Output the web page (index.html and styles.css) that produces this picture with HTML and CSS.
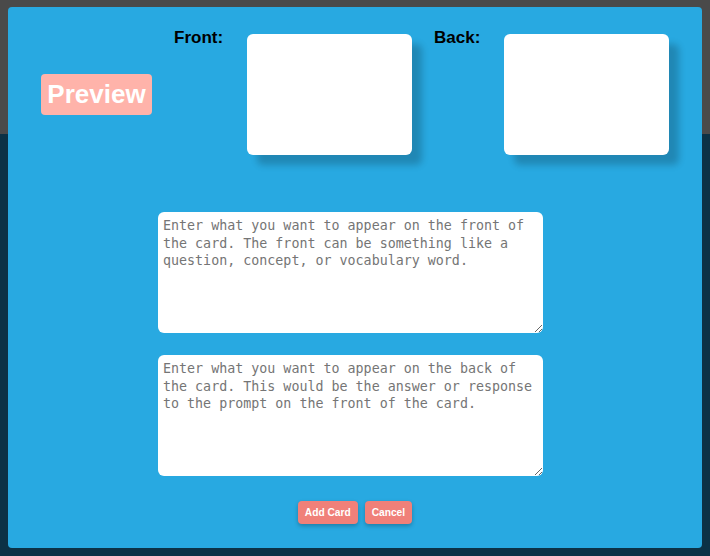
FILE: index.html
```html
<!DOCTYPE html>
<html>
<head>
<meta charset="utf-8">
<link rel="stylesheet" href="styles.css">
</head>
<body>
<div class="page">
  <div class="page-header"></div>
  <div class="page-body"></div>
</div>
<div class="modal">
  <div class="preview-row">
    <div class="preview-badge">Preview</div>
    <div class="side">
      <div class="side-label front-label">Front:</div>
      <div class="card"></div>
    </div>
    <div class="side back-side">
      <div class="side-label back-label">Back:</div>
      <div class="card"></div>
    </div>
  </div>
  <div class="form">
    <textarea class="field" placeholder="Enter what you want to appear on the front of the card. The front can be something like a question, concept, or vocabulary word."></textarea>
    <textarea class="field" placeholder="Enter what you want to appear on the back of the card. This would be the answer or response to the prompt on the front of the card."></textarea>
    <div class="actions">
      <button class="btn">Add Card</button>
      <button class="btn">Cancel</button>
    </div>
  </div>
</div>
</body>
</html>
```

FILE: styles.css
```css
html, body {
  margin: 0;
  padding: 0;
}
body {
  font-family: "Liberation Sans", Arial, sans-serif;
  width: 710px;
  height: 556px;
  overflow: hidden;
}
.page-header {
  height: 134px;
  background: #4a4a4a;
}
.page-body {
  height: 422px;
  background: #0c3246;
}
.modal {
  position: fixed;
  top: 7px;
  left: 8px;
  width: 694px;
  height: 541px;
  background: #28a9e1;
  border-radius: 4px;
  box-sizing: border-box;
}
.preview-row {
  display: flex;
  align-items: flex-start;
  padding: 21px 33px 0 33px;
}
.preview-badge {
  margin-top: 46px;
  margin-right: 22px;
  width: 111px;
  height: 41px;
  box-sizing: border-box;
  background: #ffb3aa;
  color: #fff;
  font-weight: bold;
  font-size: 26px;
  line-height: 41px;
  text-align: center;
  border-radius: 4px;
}
.side {
  display: flex;
  align-items: flex-start;
}
.back-side {
  margin-left: 22px;
}
.side-label {
  font-weight: bold;
  font-size: 17px;
  line-height: 20px;
  color: #000;
}
.front-label { width: 73px; }
.back-label { width: 70px; }
.card {
  margin-top: 6px;
  width: 165px;
  height: 121px;
  background: #fff;
  border-radius: 6px;
  box-shadow: 10px 10px 7px rgba(0, 0, 0, 0.2);
}
.form {
  display: flex;
  flex-direction: column;
  align-items: center;
  margin-top: 57px;
}
.field {
  display: block;
  width: 385px;
  height: 121px;
  box-sizing: border-box;
  margin: 0 9px 22px 0;
  padding: 5px 5px;
  border: none;
  border-radius: 6px;
  background: #fff;
  font-family: "DejaVu Sans Mono", monospace;
  font-size: 13.33px;
  line-height: 17.5px;
  color: #222;
  outline: none;
}
.field::placeholder {
  color: #757575;
}
.actions {
  display: flex;
  gap: 7px;
  margin-top: 3px;
}
.btn {
  height: 23px;
  padding: 0 7px;
  border: none;
  border-radius: 4px;
  background: #f08079;
  color: #fff;
  font-family: "Liberation Sans", Arial, sans-serif;
  font-weight: bold;
  font-size: 10.2px;
  box-shadow: 0 2px 4px rgba(0, 0, 0, 0.25);
}
```
